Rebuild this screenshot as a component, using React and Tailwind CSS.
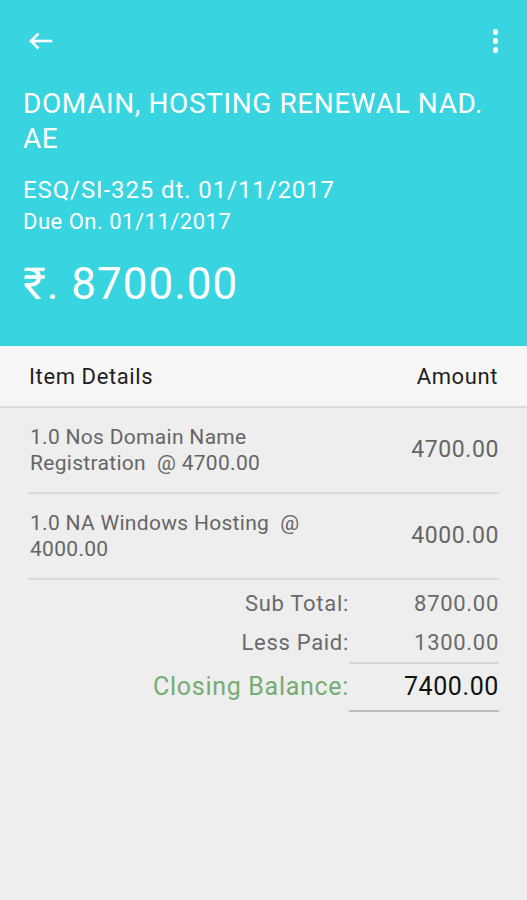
const items = [
  { text: "1.0 Nos Domain Name Registration  @ 4700.00", amount: "4700.00" },
  { text: "1.0 NA Windows Hosting  @ 4000.00", amount: "4000.00" },
];

function BackArrow() {
  return (
    <svg width="25" height="20" viewBox="0 0 25 20" fill="none" stroke="white" strokeWidth="2.6" strokeLinecap="square">
      <path d="M23 10H3" />
      <path d="M10.5 2.5L3 10l7.5 7.5" strokeLinecap="butt" />
    </svg>
  );
}

function MoreDots() {
  return (
    <div className="flex flex-col items-center gap-[3.5px]">
      <span className="h-[5.5px] w-[5.5px] rounded-full bg-white" />
      <span className="h-[5.5px] w-[5.5px] rounded-full bg-white" />
      <span className="h-[5.5px] w-[5.5px] rounded-full bg-white" />
    </div>
  );
}

export default function App() {
  return (
    <div className="min-h-[900px] w-[527px] bg-[#eeeeee] font-['Roboto',sans-serif]">
      <header className="bg-[#38d4df] px-[23px] pb-[36px] text-white">
        <div className="flex h-[82px] items-center justify-between">
          <div className="ml-[5px]">
            <BackArrow />
          </div>
          <div className="mr-[6px]">
            <MoreDots />
          </div>
        </div>
        <h1 className="mt-[4px] text-[28px] leading-[35px] tracking-[0.6px]">DOMAIN, HOSTING RENEWAL NAD. AE</h1>
        <p className="mt-[19px] text-[24px] leading-[30px] tracking-[0.9px]">ESQ/SI-325 dt. 01/11/2017</p>
        <p className="mt-[3px] text-[22px] leading-[28px] tracking-[0.5px]">Due On. 01/11/2017</p>
        <p className="mt-[22px] text-[44px] leading-[52px] tracking-[1px]">₹. 8700.00</p>
      </header>

      <div className="flex h-[62px] items-center justify-between border-b-2 border-[#dcdcdc] bg-[#f6f6f6] px-[29px] text-[22px] tracking-[0.6px] text-[#1f1f1f]">
        <span>Item Details</span>
        <span>Amount</span>
      </div>

      <div className="px-[28px]">
        {items.map((item) => (
          <div key={item.amount} className="flex items-center justify-between border-b-2 border-[#dadada] py-[16px] pl-[2px]">
            <p className="w-[300px] whitespace-pre-wrap text-[21px] leading-[26px] tracking-[0.3px] text-[#666666]">{item.text}</p>
            <p className="text-[23px] tracking-[0.6px] text-[#666666]">{item.amount}</p>
          </div>
        ))}

        <div className="grid grid-cols-[1fr_150px] pt-[4px] text-[22px] tracking-[0.7px] text-[#6a6a6a]">
          <span className="flex h-[39px] items-center justify-end">Sub Total:</span>
          <span className="flex h-[39px] items-center justify-end">8700.00</span>
          <span className="flex h-[39px] items-center justify-end">Less Paid:</span>
          <span className="flex h-[39px] items-center justify-end">1300.00</span>
          <span className="flex h-[50px] items-center justify-end text-[25px] tracking-[0.7px] text-[#74ad74]">Closing Balance:</span>
          <span className="flex h-[50px] items-center justify-end border-y-2 border-t-[#d4d4d4] border-b-[#bcbcbc] text-[25px] tracking-[0.6px] text-[#111111]">7400.00</span>
        </div>
      </div>
    </div>
  );
}
